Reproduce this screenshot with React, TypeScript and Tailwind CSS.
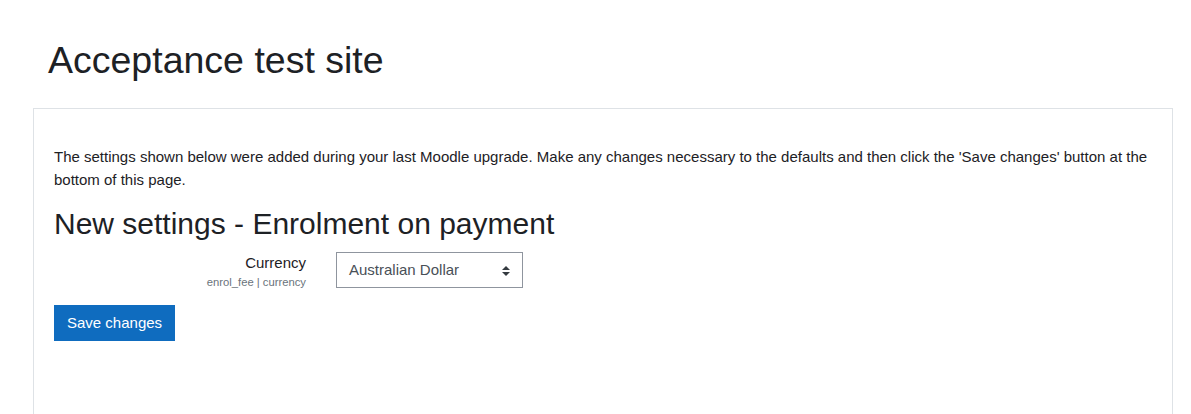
export default function App() {
  return (
    <div
      className="min-h-[414px] w-[1191px] bg-white text-[#1d2125] overflow-hidden"
      style={{ fontFamily: '"Liberation Sans", Arial, sans-serif' }}
    >
      <div className="pl-[33px]">
        <h1 className="ml-[15px] pt-[38px] text-[37.5px] leading-[1.2] font-normal">
          Acceptance test site
        </h1>
        <div className="mt-[25px] w-[1140px] h-[400px] border border-[#dee2e6] px-5 pt-[37px]">
          <p className="text-[15px] leading-[22.5px] mb-[15px]">
            The settings shown below were added during your last Moodle upgrade. Make any changes necessary to the defaults and then click the 'Save changes' button at the bottom of this page.
          </p>
          <h2 className="text-[30px] leading-[36px] font-normal">
            New settings - Enrolment on payment
          </h2>
          <div className="mt-[10px] flex">
            <div className="w-[252px] flex flex-col items-end">
              <div className="text-[15px] leading-[22.5px]">Currency</div>
              <div className="text-[11.25px] leading-[16.9px] text-[#6a737b] -mt-[1px]">
                enrol_fee | currency
              </div>
            </div>
            <div className="ml-[30px] relative w-[187px] h-[36px] border border-[#8f959e] flex items-center pl-[12px]">
              <span className="text-[15px] leading-[22.5px] text-[#495057]">Australian Dollar</span>
              <svg
                className="absolute right-[12px] top-[12.5px]"
                width="8"
                height="10"
                viewBox="0 0 4 5"
              >
                <path d="M2 0L0 2h4zm0 5L0 3h4z" fill="#343a40" />
              </svg>
            </div>
          </div>
          <button className="mt-[15px] h-[36px] px-[13px] bg-[#0f6cbf] text-white text-[15px] leading-[22.5px]">
            Save changes
          </button>
        </div>
      </div>
    </div>
  );
}
